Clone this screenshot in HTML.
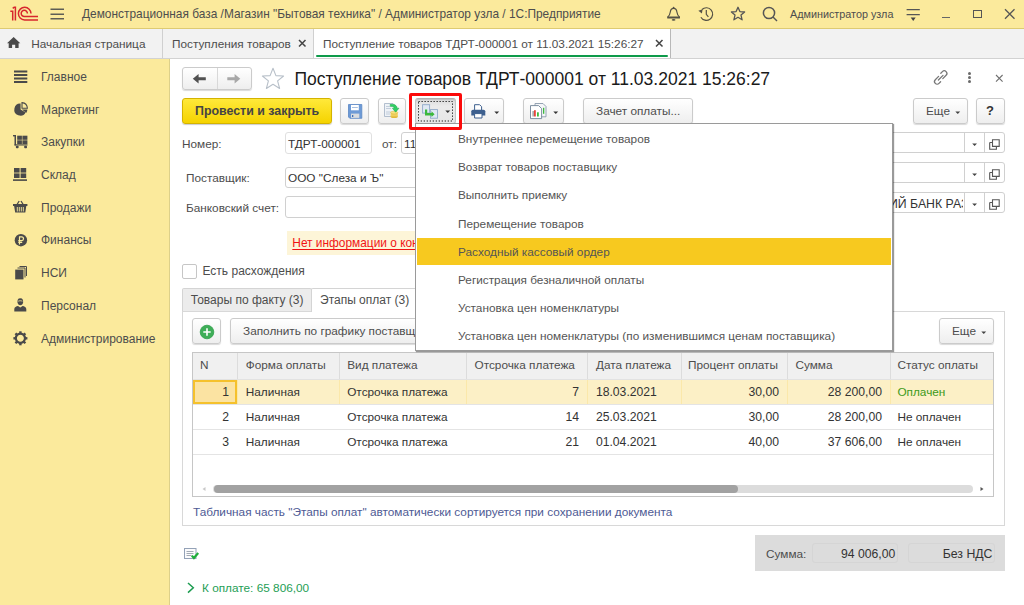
<!DOCTYPE html>
<html><head><meta charset="utf-8">
<style>
*{box-sizing:border-box;margin:0;padding:0}
html,body{width:1024px;height:605px;overflow:hidden;background:#fff;font-family:"Liberation Sans",sans-serif;font-size:11.8px;color:#4d4d4d}
.a{position:absolute;white-space:nowrap}
svg{position:absolute;overflow:visible}
#top{position:absolute;left:0;top:0;width:1024px;height:29px;background:#fbea9c;border-bottom:1px solid #decb72}
#tabs{position:absolute;left:0;top:29px;width:1024px;height:30px;background:#f2f2f2;border-bottom:1px solid #d2d2d2}
#side{position:absolute;left:0;top:59px;width:170px;height:546px;background:#fbea9c;border-right:1px solid #ddd08a}
.btn{position:absolute;border:1px solid #cbcbcb;border-radius:3px;background:linear-gradient(#ffffff,#eeeeee);box-shadow:0 1px 1px rgba(0,0,0,.15)}
.inp{position:absolute;border:1px solid #d0d0d0;border-radius:3px;background:#fff}
.side-it{position:absolute;left:41px;color:#4d4d4d;font-size:12px}
.mi{position:absolute;left:1px;width:474px;height:27px;padding-left:41px;line-height:28px;color:#555}
.cell{position:absolute;white-space:nowrap;color:#333}
</style></head><body>
<!-- TOP BAR -->
<div id="top">
  <svg width="30" height="16" style="left:9px;top:6px" viewBox="9 6 30 16">
    <g fill="none" stroke="#d7262d" stroke-width="1.5">
      <path d="M10.3 11.2 H12.7 V20.6 M12.7 8.4 L14.2 7.2 H15.4 V20.6"/>
      <path d="M31 13.6 A6.3 6.3 0 1 0 24.6 19.9 H38"/>
      <path d="M27.4 13.4 A3.1 3.1 0 1 0 24.4 16.5 H38"/>
    </g>
  </svg>
  <svg width="16" height="12" style="left:50px;top:8px" viewBox="0 0 16 12">
    <g stroke="#5e5e55" stroke-width="1.6"><path d="M0.5 1.3H14M0.5 6.3H14M0.5 10.7H14"/></g>
  </svg>
  <div class="a" style="left:82px;top:7px;font-size:11.9px;color:#4d4d4d">Демонстрационная база /Магазин "Бытовая техника" / Администратор узла / 1С:Предприятие</div>
  <!-- bell -->
  <svg width="16" height="16" style="left:666px;top:6px" viewBox="0 0 16 16"><g fill="none" stroke="#555245" stroke-width="1.2"><path d="M1.6 11.2 C3.4 9.8 4 8.2 4.3 6 C4.6 3.6 5.8 2.4 7.6 2.4 C9.4 2.4 10.6 3.6 10.9 6 C11.2 8.2 11.8 9.8 13.6 11.2"/></g><circle cx="7.6" cy="1.6" r="0.9" fill="#555245"/><rect x="1.2" y="10.6" width="12.8" height="2" rx="0.6" fill="#555245"/><ellipse cx="7.6" cy="13.9" rx="1.9" ry="0.8" fill="#555245"/></svg>
  <!-- history -->
  <svg width="16" height="16" style="left:698px;top:6px" viewBox="0 0 16 16"><g fill="none" stroke="#555245" stroke-width="1.2"><path d="M2.9 11.2 A6.3 6.3 0 1 0 4 3.5"/><path d="M8.3 3.9V8.3L10.4 10.8"/></g><path d="M0.4 4.8 L4.6 3.2 L3.9 7.6Z" fill="#555245"/></svg>
  <!-- star -->
  <svg width="16" height="16" style="left:730px;top:6px" viewBox="0 0 16 16"><path d="M8 1.3 L9.9 5.6 L14.6 6 L11 9.1 L12.1 13.8 L8 11.3 L3.9 13.8 L5 9.1 L1.4 6 L6.1 5.6Z" fill="none" stroke="#555" stroke-width="1.3" stroke-linejoin="round"/></svg>
  <!-- search -->
  <svg width="16" height="16" style="left:762px;top:6px" viewBox="0 0 16 16"><g fill="none" stroke="#555" stroke-width="1.5"><circle cx="7" cy="7" r="5.6"/><path d="M11 11 L15 15"/></g></svg>
  <div class="a" style="left:790px;top:8px;font-size:10.8px;color:#4d4d4d">Администратор узла</div>
  <!-- filter -->
  <svg width="16" height="16" style="left:905px;top:7px" viewBox="0 0 16 16"><g stroke="#555" stroke-width="1.2"><path d="M1.6 2.6H14.8M1.6 7.6H14.8"/></g><path d="M5.7 10.5H10.7L8.2 14Z" fill="#444"/></svg>
  <!-- min / max / close -->
  <div class="a" style="left:942px;top:17px;width:8px;height:1.2px;background:#666"></div>
  <div class="a" style="left:973px;top:10px;width:9px;height:8px;border:1.3px solid #555"></div>
  <svg width="12" height="12" style="left:1004px;top:8px" viewBox="0 0 12 12"><path d="M1 1.3L10.5 10.8M10.5 1.3L1 10.8" stroke="#555" stroke-width="1.3"/></svg>
</div>

<!-- OPEN TABS -->
<div id="tabs">
  <svg width="15" height="13" style="left:7px;top:7.6px" viewBox="0 0 15 13"><path d="M0 6.2 L6.65 0 L13.3 6.2 H11.6 V11 H8.2 V7.8 H5.1 V11 H1.7 V6.2Z" fill="#4a4a4a"/></svg>
  <div class="a" style="left:31.3px;top:8px;color:#4d4d4d">Начальная страница</div>
  <div class="a" style="left:162px;top:0;width:1px;height:29px;background:#d0d0d0"></div>
  <div class="a" style="left:172px;top:8px;color:#4d4d4d">Поступления товаров</div>
  <svg width="9" height="9" style="left:298px;top:10px" viewBox="0 0 9 9"><path d="M1 1L7.5 7.5M7.5 1L1 7.5" stroke="#444" stroke-width="1.5"/></svg>
  <div class="a" style="left:313px;top:0;width:358px;height:29px;background:#fff;border-left:1px solid #d0d0d0;border-right:1px solid #b8b8b8"></div>
  <div class="a" style="left:315.5px;top:26.3px;width:352px;height:1.9px;border-radius:1px;background:#0e9a4a"></div>
  <div class="a" style="left:323px;top:8px;color:#4d4d4d">Поступление товаров ТДРТ-000001 от 11.03.2021 15:26:27</div>
  <svg width="9" height="9" style="left:655px;top:10px" viewBox="0 0 9 9"><path d="M1 1L7.5 7.5M7.5 1L1 7.5" stroke="#444" stroke-width="1.5"/></svg>
</div>

<!-- SIDEBAR -->
<div id="side">
<div class="side-it" style="top:10.7px">Главное</div>
<svg width="14" height="14" style="left:14px;top:10.6px" viewBox="0 0 14 14"><g fill="#4a4a4a"><rect x="0" y="0.5" width="13.3" height="2"/><rect x="0" y="4" width="13.3" height="2"/><rect x="0" y="7.5" width="13.3" height="2"/><rect x="0" y="11" width="13.3" height="2"/></g></svg>
<div class="side-it" style="top:43.5px">Маркетинг</div>
<svg width="14" height="14" style="left:14px;top:43px" viewBox="0 0 14 14"><path d="M6.6 1.6 V7.6 L11.6 10.4 A6 6 0 1 1 6.6 1.6Z" fill="#4a4a4a"/><path d="M8 0.6 A6 6 0 0 1 13.4 6.2 H8Z" fill="none" stroke="#4a4a4a" stroke-width="1.1"/><path d="M8 7.6 H13.4 A6 6 0 0 1 12.2 10.9Z" fill="#4a4a4a"/></svg>
<div class="side-it" style="top:76.2px">Закупки</div>
<svg width="15" height="14" style="left:13px;top:75.7px" viewBox="0 0 15 14"><g fill="#4a4a4a"><rect x="0" y="0" width="2.6" height="1.4"/><rect x="1.5" y="0" width="1.5" height="10.4"/><rect x="4.2" y="0.7" width="4.7" height="4.1"/><rect x="9.4" y="0.7" width="5" height="4.1"/><rect x="4.2" y="5.3" width="4.7" height="3.7"/><rect x="9.4" y="5.3" width="5" height="3.7"/><rect x="1.5" y="9.3" width="13" height="1.2"/><rect x="2.9" y="10.8" width="2.7" height="2.4" rx="0.8"/><rect x="11.2" y="10.8" width="2.8" height="2.4" rx="0.8"/></g></svg>
<div class="side-it" style="top:108.9px">Склад</div>
<svg width="15" height="14" style="left:13px;top:108.9px" viewBox="0 0 15 14"><g fill="#4a4a4a"><rect x="1" y="0" width="5.6" height="4.6"/><rect x="7.6" y="0" width="5.6" height="4.6"/><rect x="1" y="5.4" width="5.6" height="4.6"/><rect x="7.6" y="5.4" width="5.6" height="4.6"/><rect x="0" y="11.3" width="14" height="1.6"/></g></svg>
<div class="side-it" style="top:141.7px">Продажи</div>
<svg width="15" height="14" style="left:13px;top:141.0px" viewBox="0 0 15 14"><path d="M4 4.5 L6.2 1 M10.2 4.5 L8 1" stroke="#4a4a4a" stroke-width="1.3" fill="none"/><path d="M0 4 H14.4 V6 H13.3 L12.3 12.6 H2.2 L1.1 6 H0Z" fill="#4a4a4a"/><path d="M4.3 7 V11.5 M6.3 7 V11.5 M8.3 7 V11.5 M10.3 7 V11.5" stroke="#fbed9e" stroke-width="0.9"/></svg>
<div class="side-it" style="top:174.4px">Финансы</div>
<svg width="14" height="14" style="left:14px;top:175.3px" viewBox="0 0 14 14"><circle cx="6.9" cy="6.2" r="6.2" fill="#4a4a4a"/><path d="M5.5 10.4 V2.8 H7.6 A1.9 1.9 0 0 1 7.6 6.6 H4.3 M4.3 8.3 H8.2" stroke="#fbed9e" stroke-width="1.2" fill="none"/></svg>
<div class="side-it" style="top:207.2px">НСИ</div>
<svg width="14" height="14" style="left:14px;top:207.3px" viewBox="0 0 14 14"><path d="M5.5 0.5 H12.5 V10" stroke="#4a4a4a" stroke-width="1" fill="none"/><path d="M3.5 2 H11 V11.5" stroke="#4a4a4a" stroke-width="1" fill="none"/><rect x="1.2" y="3.6" width="8.3" height="9.8" fill="#4a4a4a"/></svg>
<div class="side-it" style="top:239.9px">Персонал</div>
<svg width="14" height="14" style="left:14px;top:239.3px" viewBox="0 0 14 14"><path d="M6.3 0.3 C3.8 0.3 3.3 2.2 3.5 4.3 C3.7 6.2 4.8 7.3 6.3 7.3 C7.8 7.3 8.9 6.2 9.1 4.3 C9.3 2.2 8.8 0.3 6.3 0.3Z" fill="#4a4a4a"/><path d="M0.3 13.5 V11 C0.3 9.3 2.3 8.3 4 8.1 L6.3 9.6 L8.6 8.1 C10.3 8.3 12.3 9.3 12.3 11 V13.5Z" fill="#4a4a4a"/><path d="M4.2 3.2 C5.5 2.6 7 2.6 8.4 3.2" stroke="#fbed9e" stroke-width="0.8" fill="none"/></svg>
<div class="side-it" style="top:272.7px">Администрирование</div>
<svg width="15" height="15" style="left:13px;top:272.4px" viewBox="0 0 15 15"><g transform="translate(7.4 7.3)"><circle r="4.6" fill="none" stroke="#4a4a4a" stroke-width="2.2"/><g fill="#4a4a4a"><rect x="-1.2" y="-7" width="2.4" height="3"/><rect x="-1.2" y="-7" width="2.4" height="3" transform="rotate(45)"/><rect x="-1.2" y="-7" width="2.4" height="3" transform="rotate(90)"/><rect x="-1.2" y="-7" width="2.4" height="3" transform="rotate(135)"/><rect x="-1.2" y="-7" width="2.4" height="3" transform="rotate(180)"/><rect x="-1.2" y="-7" width="2.4" height="3" transform="rotate(225)"/><rect x="-1.2" y="-7" width="2.4" height="3" transform="rotate(270)"/><rect x="-1.2" y="-7" width="2.4" height="3" transform="rotate(315)"/></g></g></svg>
</div>

<!-- FORM HEADER -->
<div class="btn" style="left:182px;top:67px;width:70px;height:23px;"></div>
<div class="a" style="left:217px;top:68px;width:1px;height:21px;background:#d8d8d8"></div>
<svg width="15" height="11" style="left:192px;top:73px" viewBox="0 0 15 11"><path d="M0.8 5.8 L6.6 1 V4.2 H13.8 V7.3 H6.6 V10.6 Z" fill="#505050"/></svg>
<svg width="15" height="11" style="left:227px;top:73px" viewBox="0 0 15 11"><path d="M13.3 5.8 L7.6 1 V4.2 H0.3 V7.3 H7.6 V10.6 Z" fill="#a8a8a8"/></svg>
<svg width="24" height="24" style="left:261px;top:66.5px" viewBox="0 0 24 24"><path d="M12 1.3 L14.9 8.6 L22.6 9 L16.6 13.9 L18.6 21.5 L12 17.3 L5.4 21.5 L7.4 13.9 L1.4 9 L9.1 8.6Z" fill="none" stroke="#b8c0c9" stroke-width="1.1" stroke-linejoin="round"/></svg>
<div class="a" style="left:294.5px;top:68.5px;font-size:17.5px;color:#1a1a1a">Поступление товаров ТДРТ-000001 от 11.03.2021 15:26:27</div>
<svg width="16" height="15" style="left:933px;top:70px" viewBox="0 0 16 15"><g fill="none" stroke="#777" stroke-width="1.3" stroke-linecap="round"><path d="M5.6 6.4 L2.3 9.7 A2.6 2.6 0 0 0 6 13.4 L7.6 11.8"/><path d="M9.8 8.6 L13.1 5.3 A2.6 2.6 0 0 0 9.4 1.6 L7.8 3.2"/><path d="M5.4 10 L10 5.4"/></g></svg>
<div class="a" style="left:967.6px;top:72.2px;width:3px;height:3px;border-radius:2px;background:#6a6a6a"></div>
<div class="a" style="left:967.6px;top:76.2px;width:3px;height:3px;border-radius:2px;background:#6a6a6a"></div>
<div class="a" style="left:967.6px;top:80.2px;width:3px;height:3px;border-radius:2px;background:#6a6a6a"></div>
<svg width="9" height="9" style="left:994.5px;top:73.8px" viewBox="0 0 9 9"><path d="M1 1L7.6 7.6M7.6 1L1 7.6" stroke="#707070" stroke-width="1.1"/></svg>

<!-- COMMAND BAR -->
<div class="a" style="left:182px;top:98px;width:150px;height:26px;border:1px solid #d4b300;border-radius:3px;background:linear-gradient(#ffe93a,#f5d300);box-shadow:0 1px 1px rgba(0,0,0,.2)"></div>
<div class="a" style="left:195px;top:104.3px;font-weight:bold;font-size:12.4px;color:#444">Провести и закрыть</div>
<div class="btn" style="left:340px;top:98px;width:29px;height:26px"></div>
<div class="btn" style="left:378px;top:98px;width:28px;height:26px"></div>

<div class="a" style="left:415px;top:98px;width:41px;height:26px;border:1px solid #c4c4c4;border-top-color:#b0b0b0;border-radius:3px;background:linear-gradient(#dadada,#ebebeb 30%,#e6e6e6);box-shadow:inset 0 1px 1px rgba(0,0,0,.12)"></div>
<div class="btn" style="left:464px;top:98px;width:40px;height:26px"></div>
<div class="btn" style="left:523px;top:98px;width:41px;height:26px"></div>

<!-- cmd icons -->
<svg width="15" height="15" style="left:347.5px;top:103.5px" viewBox="0 0 15 15">
  <path d="M0.5 0.5 H13.8 V14.3 H1.8 L0.5 13Z" fill="#6d9ad6" stroke="#5a86c4" stroke-width="0.8"/>
  <rect x="3" y="1" width="7.8" height="5.3" fill="#fff"/>
  <rect x="4" y="3" width="5.8" height="0.9" fill="#9db8de"/>
  <rect x="3" y="9.6" width="8.3" height="4.3" fill="#d9dcdf"/>
  <rect x="4" y="11" width="1.3" height="2" fill="#3f6fb5"/>
</svg>
<svg width="16" height="16" style="left:384px;top:103px" viewBox="0 0 16 16">
  <path d="M0.5 0.5 H9 L12.3 3.8 V13.5 H0.5Z" fill="#eef2f7" stroke="#aab8c8" stroke-width="0.9"/>
  <path d="M2 3.5H6M2 5.5H7M2 9H7M2 11H6" stroke="#b5c3d3" stroke-width="0.8"/>
  <ellipse cx="10.2" cy="13.4" rx="3.6" ry="1.6" fill="#e1b93a"/>
  <rect x="6.6" y="9.6" width="7.2" height="3.8" fill="#f0d060"/>
  <ellipse cx="10.2" cy="9.6" rx="3.6" ry="1.4" fill="#f7e27e" stroke="#d8b23a" stroke-width="0.5"/>
  <path d="M6 1.5 C10 0.8 12.8 2 13.2 5.2 L15 5.2 L11.6 9.2 L8.4 5.2 L10.2 5.2 C10 3.6 8.6 3.1 6.5 3.6Z" fill="#2fcf63" stroke="#1ea84a" stroke-width="0.5"/>
</svg>
<svg width="36" height="21" style="left:418px;top:101px" viewBox="0 0 36 21"><rect x="0.5" y="0.5" width="34" height="19.5" fill="none" stroke="#222" stroke-width="1" stroke-dasharray="1.3 1.7"/></svg>
<svg width="16" height="15" style="left:421.5px;top:103.5px" viewBox="0 0 16 15">
  <rect x="0.6" y="0.7" width="7" height="8.4" fill="#dfe8f3" stroke="#8fa9c9" stroke-width="0.9"/>
  <rect x="8.5" y="5.6" width="7" height="8.6" fill="#dfe8f3" stroke="#8fa9c9" stroke-width="0.9"/>
  <path d="M3 5.5 H5.2 V9 H9.5 V7.3 L12.6 10.2 L9.5 13.1 V11.4 H3Z" fill="#3cb83c"/>
</svg>
<svg width="6" height="4" style="left:444.5px;top:110px" viewBox="0 0 6 4"><path d="M0.3 0.5H5.2L2.75 3Z" fill="#333"/></svg>
<svg width="16" height="15" style="left:471px;top:103.5px" viewBox="0 0 16 15">
  <path d="M3.6 6 V0.7 H8.6 L10.6 2.7 V6" fill="#fff" stroke="#3d5f8e" stroke-width="1"/>
  <path d="M0.3 7.3 Q0.3 5.7 2 5.7 H12.4 Q14.3 5.7 14.3 7.3 V11.4 H0.3Z" fill="#3d5f8e"/>
  <path d="M3.6 9.6 H11 V14 H3.6Z" fill="#fff" stroke="#3d5f8e" stroke-width="1"/>
</svg>
<svg width="6" height="4" style="left:493.5px;top:110.5px" viewBox="0 0 6 4"><path d="M0.3 0.5H5.2L2.75 3Z" fill="#333"/></svg>
<svg width="17" height="17" style="left:529.5px;top:103px" viewBox="0 0 17 17">
  <path d="M5 0.5 H13 L16 3.5 V13.8 H5Z" fill="#f4f6f8" stroke="#8a9aab" stroke-width="0.9"/>
  <path d="M0.5 2.6 H8.6 L11.6 5.6 V15.6 H0.5Z" fill="#fff" stroke="#6f8296" stroke-width="0.9"/>
  <rect x="2.6" y="8" width="1" height="5.5" fill="#777"/>
  <rect x="4" y="7.2" width="1.8" height="6.3" fill="#e8443a"/>
  <rect x="7" y="9.3" width="1.8" height="4.2" fill="#3dbb3d"/>
  <rect x="13" y="4.8" width="1.3" height="6" fill="#3dbb3d"/>
</svg>
<svg width="6" height="4" style="left:552.5px;top:110.5px" viewBox="0 0 6 4"><path d="M0.3 0.5H5.2L2.75 3Z" fill="#333"/></svg>
<div class="btn" style="left:583px;top:98px;width:110px;height:26px"></div>
<div class="a" style="left:596px;top:104px">Зачет оплаты...</div>
<div class="btn" style="left:913px;top:98px;width:55px;height:26px"></div>
<div class="a" style="left:926px;top:104px">Еще</div>
<svg width="6" height="4" style="left:955px;top:110.5px" viewBox="0 0 6 4"><path d="M0.3 0.5H5.2L2.75 3Z" fill="#444"/></svg>
<div class="btn" style="left:976px;top:98px;width:29px;height:26px"></div>
<div class="a" style="left:986px;top:103px;font-weight:bold;font-size:13px;color:#333">?</div>

<!-- FORM FIELDS -->
<div class="a" style="left:182px;top:137px">Номер:</div>
<div class="inp" style="left:285px;top:132px;width:87px;height:22px;border-color:#e0e0e0"></div>
<div class="a" style="left:288px;top:137px;color:#333">ТДРТ-000001</div>
<div class="a" style="left:382px;top:137px">от:</div>
<div class="inp" style="left:401px;top:132px;width:40px;height:22px"></div>
<div class="a" style="left:404px;top:137px;color:#333">11</div>
<div class="a" style="left:186px;top:171px">Поставщик:</div>
<div class="inp" style="left:285px;top:167px;width:160px;height:21px"></div>
<div class="a" style="left:288px;top:171px;color:#333">ООО "Слеза и Ъ"</div>
<div class="a" style="left:186px;top:201px">Банковский счет:</div>
<div class="inp" style="left:285px;top:196px;width:160px;height:22px"></div>

<div class="inp" style="left:860px;top:132px;width:145px;height:21px"></div>
<div class="a" style="left:964px;top:132px;width:1px;height:21px;background:#d0d0d0"></div>
<div class="a" style="left:984px;top:132px;width:1px;height:21px;background:#d0d0d0"></div>
<svg width="6" height="4" style="left:971.8px;top:142.5px" viewBox="0 0 6 4"><path d="M0.2 0.4H5L2.6 3Z" fill="#444"/></svg>
<svg width="11" height="11" style="left:989px;top:139.0px" viewBox="0 0 11 11"><path d="M3.5 0.7H10.2V7.4H3.5Z M0.7 3.5H3.3 M0.7 3.5V10.2H7.4V7.6" fill="none" stroke="#555" stroke-width="1.1"/></svg>
<div class="inp" style="left:860px;top:162px;width:145px;height:21px"></div>
<div class="a" style="left:964px;top:162px;width:1px;height:21px;background:#d0d0d0"></div>
<div class="a" style="left:984px;top:162px;width:1px;height:21px;background:#d0d0d0"></div>
<svg width="6" height="4" style="left:971.8px;top:172.5px" viewBox="0 0 6 4"><path d="M0.2 0.4H5L2.6 3Z" fill="#444"/></svg>
<svg width="11" height="11" style="left:989px;top:169.0px" viewBox="0 0 11 11"><path d="M3.5 0.7H10.2V7.4H3.5Z M0.7 3.5H3.3 M0.7 3.5V10.2H7.4V7.6" fill="none" stroke="#555" stroke-width="1.1"/></svg>
<div class="inp" style="left:860px;top:192px;width:145px;height:21px"></div>
<div class="a" style="left:964px;top:192px;width:1px;height:21px;background:#d0d0d0"></div>
<div class="a" style="left:984px;top:192px;width:1px;height:21px;background:#d0d0d0"></div>
<svg width="6" height="4" style="left:971.8px;top:202.5px" viewBox="0 0 6 4"><path d="M0.2 0.4H5L2.6 3Z" fill="#444"/></svg>
<svg width="11" height="11" style="left:989px;top:199.0px" viewBox="0 0 11 11"><path d="M3.5 0.7H10.2V7.4H3.5Z M0.7 3.5H3.3 M0.7 3.5V10.2H7.4V7.6" fill="none" stroke="#555" stroke-width="1.1"/></svg>
<div class="a" style="left:880px;top:193.5px;width:83px;height:19px;overflow:hidden"><div class="a" style="left:9px;top:3px;font-size:12.3px;color:#333">ИЙ БАНК РАЗВИТИЯ</div></div>


<div class="a" style="left:287px;top:231px;width:160px;height:24px;background:#fdf5d8"></div>
<div class="a" style="left:292.3px;top:235.6px;font-size:11.9px;color:#f01414;text-decoration:underline;text-decoration-skip-ink:none;text-underline-offset:1.5px">Нет информации о контрагенте</div>

<div class="a" style="left:182px;top:264px;width:15px;height:15px;border:1px solid #c6c6c6;border-radius:2px;background:#fff"></div>
<div class="a" style="left:202.5px;top:264.3px;font-size:12px">Есть расхождения</div>

<!-- TAB PANEL -->
<div class="a" style="left:182px;top:311px;width:823px;height:215px;border:1px solid #d8d8d8"></div>
<div class="a" style="left:182px;top:288px;width:130px;height:23px;background:#ececec;border:1px solid #d4d4d4;border-bottom:none;border-radius:2px 2px 0 0"></div>
<div class="a" style="left:190.8px;top:292.6px;font-size:12px;color:#4d4d4d">Товары по факту (3)</div>
<div class="a" style="left:311px;top:288px;width:110px;height:24px;background:#fff;border:1px solid #d4d4d4;border-bottom:none;border-radius:2px 2px 0 0"></div>
<div class="a" style="left:320px;top:292.6px;font-size:12px;color:#4d4d4d">Этапы оплат (3)</div>

<div class="btn" style="left:192px;top:318px;width:29px;height:26px"></div>
<svg width="16" height="16" style="left:199px;top:323.5px" viewBox="0 0 16 16"><circle cx="8" cy="8" r="6.8" fill="#3fae58" stroke="#2f9f4a" stroke-width="0.8"/><path d="M8 4.3V11.7M4.3 8H11.7" stroke="#fff" stroke-width="1.6"/></svg>
<div class="btn" style="left:230px;top:318px;width:200px;height:26px"></div>
<div class="a" style="left:243px;top:324px">Заполнить по графику поставщика</div>
<div class="btn" style="left:939px;top:318px;width:55px;height:26px"></div>
<div class="a" style="left:952px;top:324px">Еще</div>
<svg width="6" height="4" style="left:981px;top:330.5px" viewBox="0 0 6 4"><path d="M0.3 0.5H5.2L2.75 3Z" fill="#444"/></svg>

<!-- TABLE -->
<div class="a" id="tbl" style="left:192px;top:352px;width:802px;height:145px;border:1px solid #c6c6c6;background:#fff;overflow:hidden">
<div class="a" style="left:0;top:0;width:800px;height:27px;background:#f0f0f0;border-bottom:1px solid #e2e2e2"></div>
<div class="a" style="left:44px;top:0;width:1px;height:26px;background:#dcdcdc"></div>
<div class="a" style="left:146px;top:0;width:1px;height:26px;background:#dcdcdc"></div>
<div class="a" style="left:273px;top:0;width:1px;height:26px;background:#dcdcdc"></div>
<div class="a" style="left:394px;top:0;width:1px;height:26px;background:#dcdcdc"></div>
<div class="a" style="left:488px;top:0;width:1px;height:26px;background:#dcdcdc"></div>
<div class="a" style="left:594px;top:0;width:1px;height:26px;background:#dcdcdc"></div>
<div class="a" style="left:697px;top:0;width:1px;height:26px;background:#dcdcdc"></div>
<div class="cell" style="left:7.0px;top:5px;color:#4d4d4d">N</div>
<div class="cell" style="left:52.7px;top:5px;color:#4d4d4d">Форма оплаты</div>
<div class="cell" style="left:154.2px;top:5px;color:#4d4d4d">Вид платежа</div>
<div class="cell" style="left:281.5px;top:5px;color:#4d4d4d">Отсрочка платежа</div>
<div class="cell" style="left:402.9px;top:5px;color:#4d4d4d">Дата платежа</div>
<div class="cell" style="left:495.0px;top:5px;color:#4d4d4d">Процент оплаты</div>
<div class="cell" style="left:602.4px;top:5px;color:#4d4d4d">Сумма</div>
<div class="cell" style="left:704.4px;top:5px;color:#4d4d4d">Статус оплаты</div>
<div class="a" style="left:0;top:27px;width:800px;height:24px;background:#fcf0c6"></div>
<div class="a" style="left:44px;top:27px;width:1px;height:24px;background:#fbe8aa"></div>
<div class="a" style="left:146px;top:27px;width:1px;height:24px;background:#fbe8aa"></div>
<div class="a" style="left:273px;top:27px;width:1px;height:24px;background:#fbe8aa"></div>
<div class="a" style="left:394px;top:27px;width:1px;height:24px;background:#fbe8aa"></div>
<div class="a" style="left:488px;top:27px;width:1px;height:24px;background:#fbe8aa"></div>
<div class="a" style="left:594px;top:27px;width:1px;height:24px;background:#fbe8aa"></div>
<div class="a" style="left:697px;top:27px;width:1px;height:24px;background:#fbe8aa"></div>
<div class="a" style="left:0;top:27px;width:44px;height:24px;border:2px solid #f5c12c;background:#fbe3a2"></div>
<div class="a" style="left:0;top:51px;width:800px;height:1px;background:#e4e4e4"></div>
<div class="cell" style="right:764px;top:31.6px;font-size:12.2px;color:#333">1</div>
<div class="cell" style="left:52.7px;top:31.6px;color:#333">Наличная</div>
<div class="cell" style="left:154.2px;top:31.6px;color:#333">Отсрочка платежа</div>
<div class="cell" style="right:414px;top:31.6px;font-size:12.2px;color:#333">7</div>
<div class="cell" style="left:402.9px;top:31.6px;font-size:12.2px;color:#333">18.03.2021</div>
<div class="cell" style="right:214px;top:31.6px;font-size:12.2px;color:#333">30,00</div>
<div class="cell" style="right:111px;top:31.6px;font-size:12.2px;color:#333">28 200,00</div>
<div class="cell" style="left:704.4px;top:31.6px;color:#3c9a1a">Оплачен</div>
<div class="a" style="left:0;top:76px;width:800px;height:1px;background:#e4e4e4"></div>
<div class="cell" style="right:764px;top:56.6px;font-size:12.2px;color:#333">2</div>
<div class="cell" style="left:52.7px;top:56.6px;color:#333">Наличная</div>
<div class="cell" style="left:154.2px;top:56.6px;color:#333">Отсрочка платежа</div>
<div class="cell" style="right:414px;top:56.6px;font-size:12.2px;color:#333">14</div>
<div class="cell" style="left:402.9px;top:56.6px;font-size:12.2px;color:#333">25.03.2021</div>
<div class="cell" style="right:214px;top:56.6px;font-size:12.2px;color:#333">30,00</div>
<div class="cell" style="right:111px;top:56.6px;font-size:12.2px;color:#333">28 200,00</div>
<div class="cell" style="left:704.4px;top:56.6px;color:#333">Не оплачен</div>
<div class="a" style="left:0;top:101px;width:800px;height:1px;background:#e4e4e4"></div>
<div class="cell" style="right:764px;top:81.6px;font-size:12.2px;color:#333">3</div>
<div class="cell" style="left:52.7px;top:81.6px;color:#333">Наличная</div>
<div class="cell" style="left:154.2px;top:81.6px;color:#333">Отсрочка платежа</div>
<div class="cell" style="right:414px;top:81.6px;font-size:12.2px;color:#333">21</div>
<div class="cell" style="left:402.9px;top:81.6px;font-size:12.2px;color:#333">01.04.2021</div>
<div class="cell" style="right:214px;top:81.6px;font-size:12.2px;color:#333">40,00</div>
<div class="cell" style="right:111px;top:81.6px;font-size:12.2px;color:#333">37 606,00</div>
<div class="cell" style="left:704.4px;top:81.6px;color:#333">Не оплачен</div>
<div class="a" style="left:20px;top:132px;width:760px;height:8px;border-radius:4px;background:#dcdcdc"></div>
<div class="a" style="left:21px;top:132px;width:524px;height:8px;border-radius:4px;background:#a2a2a2"></div>
<svg width="6" height="6" style="left:8px;top:133px" viewBox="0 0 6 6"><path d="M4.5 1 L1.5 3 L4.5 5Z" fill="#c8c8c8"/></svg>
<svg width="6" height="6" style="left:786px;top:133px" viewBox="0 0 6 6"><path d="M1.5 1 L4.5 3 L1.5 5Z" fill="#555"/></svg>
</div>

<div class="a" style="left:193px;top:505px;color:#4e5a94">Табличная часть "Этапы оплат" автоматически сортируется при сохранении документа</div>

<!-- FOOTER -->
<div class="a" style="left:755px;top:535px;width:250px;height:36px;background:#dcdcdc"></div>
<div class="a" style="left:766px;top:547px">Сумма:</div>
<div class="a" style="left:812px;top:543px;width:86px;height:20px;border:1px solid #d5d5d5;border-radius:3px"></div>
<div class="a" style="right:128.8px;top:546.5px;font-size:12.2px;color:#333">94 006,00</div>
<div class="a" style="left:908px;top:543px;width:87px;height:20px;border:1px solid #d5d5d5;border-radius:3px"></div>
<div class="a" style="right:31.5px;top:546.5px;font-size:12.3px;color:#333">Без НДС</div>

<svg width="16" height="12" style="left:184px;top:548px" viewBox="0 0 16 12"><rect x="0.5" y="0.5" width="11.5" height="10" fill="#fbfbfc" stroke="#94a2b7" stroke-width="1"/><path d="M2.5 3.5H9.5M2.5 5.5H9.5M2.5 7.5H7.5" stroke="#a2aab4" stroke-width="1"/><path d="M7.8 7.6 L9.9 10 L14.2 5" fill="none" stroke="#1fae3a" stroke-width="2.2"/></svg>
<svg width="8" height="12" style="left:186.5px;top:582px" viewBox="0 0 8 12"><path d="M1 1 L6.3 5.8 L1 10.6" fill="none" stroke="#1c9c50" stroke-width="1.5"/></svg>
<div class="a" style="left:202px;top:581px;color:#1e9e55">К оплате: 65 806,00</div>

<!-- DROPDOWN MENU -->
<div class="a" id="menu" style="left:415px;top:123px;width:478px;height:228px;background:#fff;border:1px solid #9a9a9a;box-shadow:1px 1px 1px rgba(0,0,0,.4)">
<div class="mi" style="top:1.2px;">Внутреннее перемещение товаров</div>
<div class="mi" style="top:29.3px;">Возврат товаров поставщику</div>
<div class="mi" style="top:57.4px;">Выполнить приемку</div>
<div class="mi" style="top:85.5px;">Перемещение товаров</div>
<div class="mi" style="top:113.6px;background:#f7c91f;">Расходный кассовый ордер</div>
<div class="mi" style="top:141.7px;">Регистрация безналичной оплаты</div>
<div class="mi" style="top:169.8px;">Установка цен номенклатуры</div>
<div class="mi" style="top:197.9px;">Установка цен номенклатуры (по изменившимся ценам поставщика)</div>
</div>
<div class="a" style="left:409px;top:92.5px;width:53px;height:37.5px;border:3px solid #fb0a0a;border-radius:2px;z-index:10"></div>
</body></html>
